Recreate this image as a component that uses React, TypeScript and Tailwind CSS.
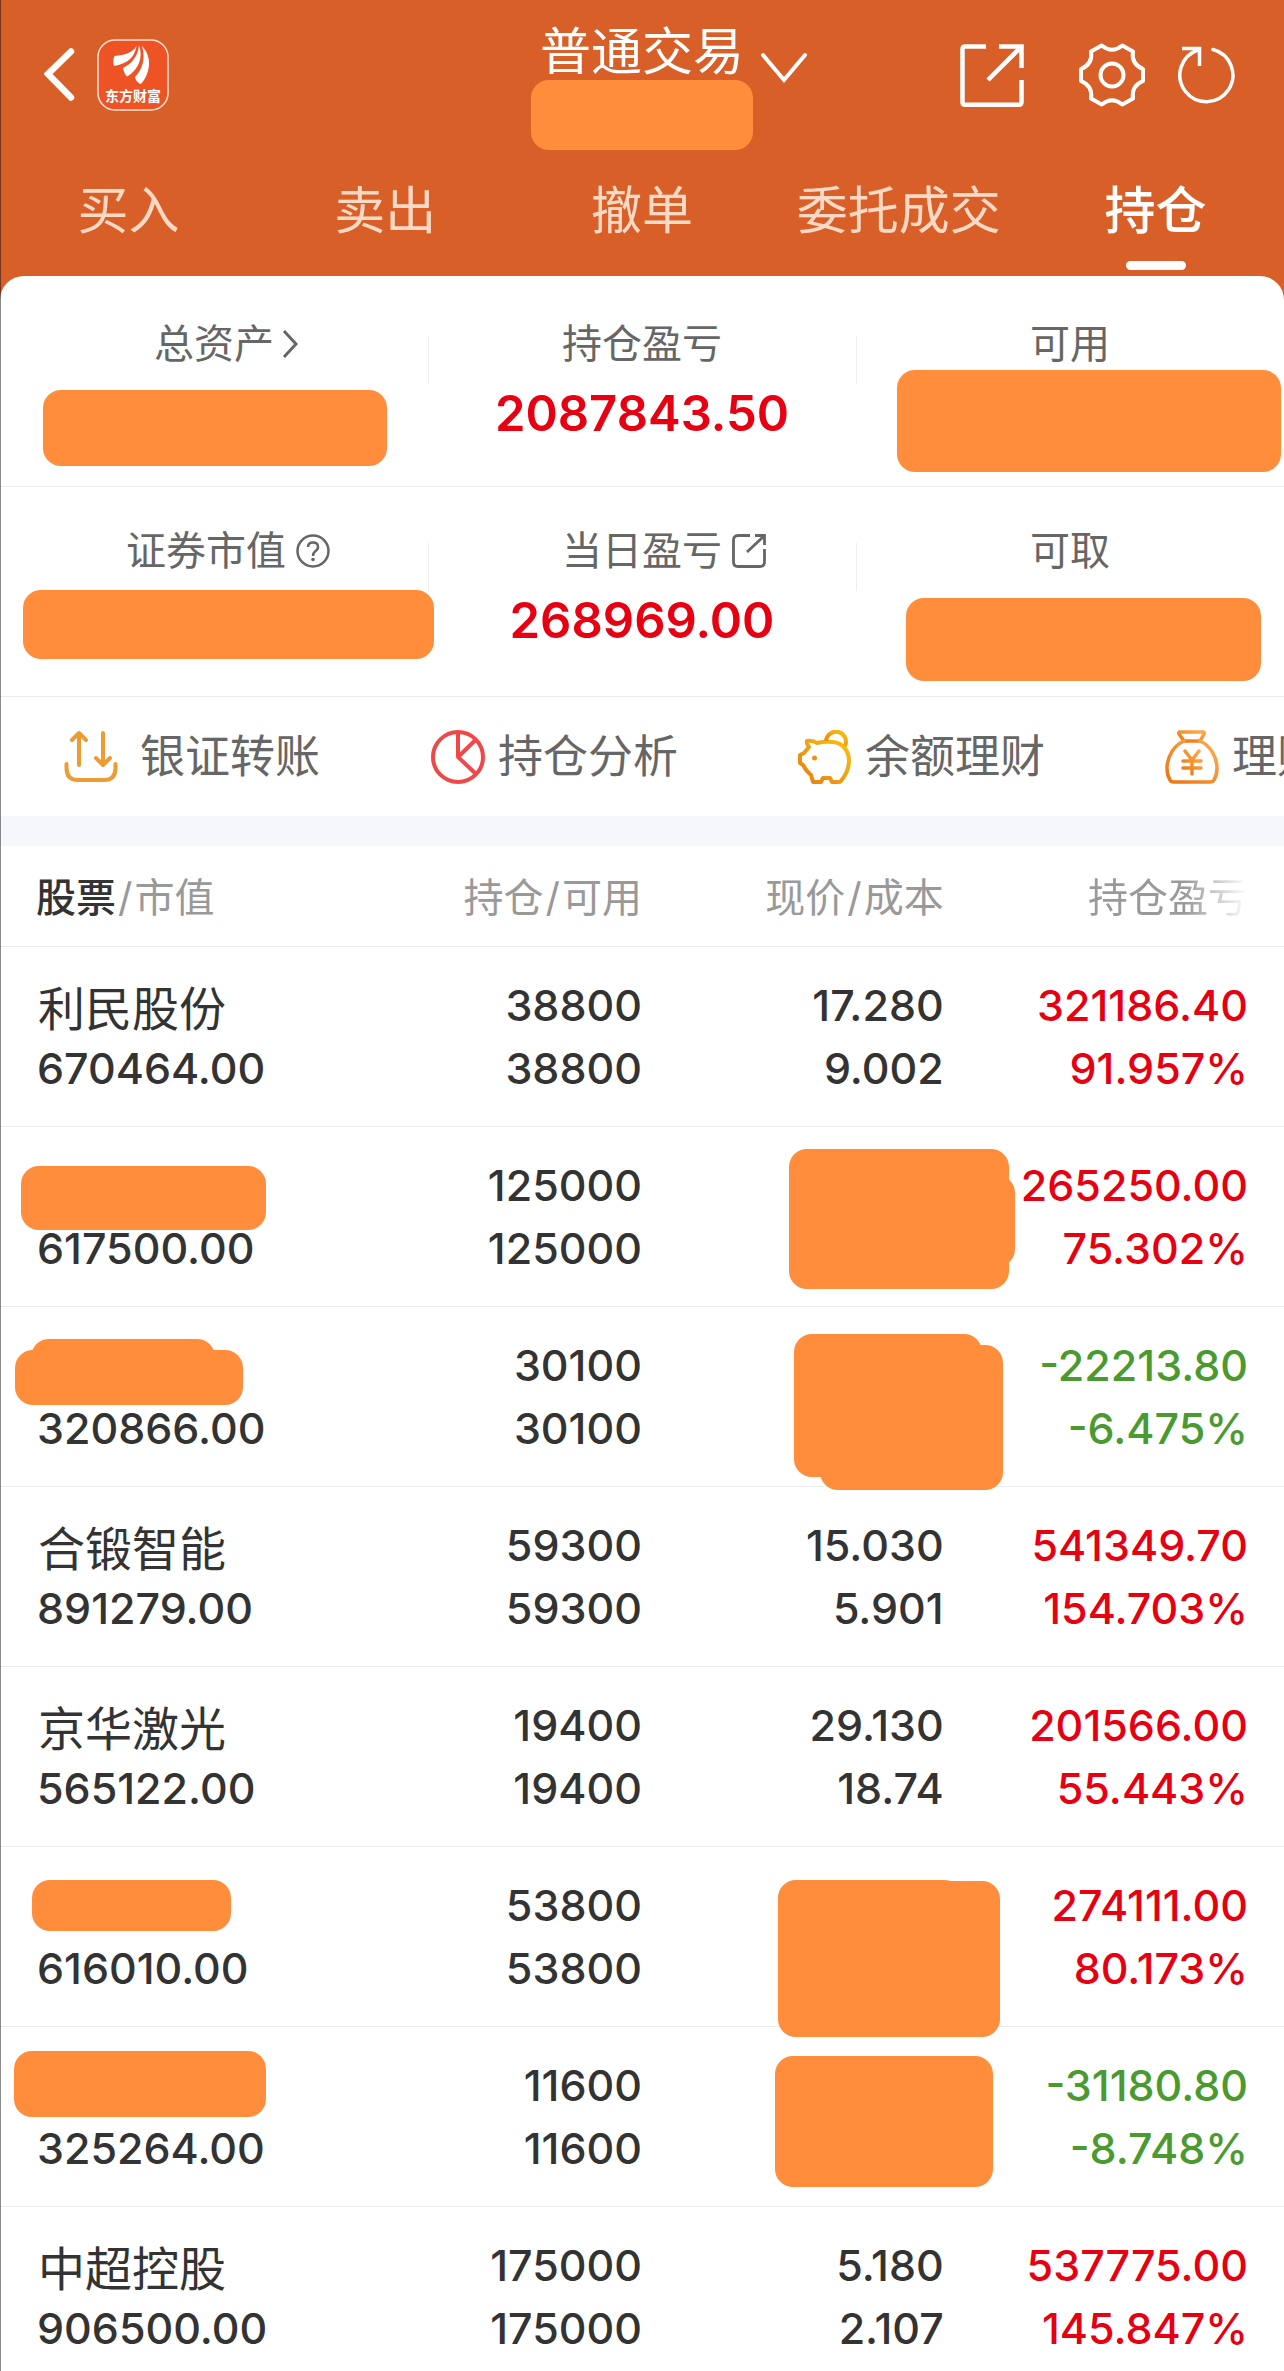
import React, { useState } from 'react';

type Holding = {
  name?: string;
  value: string;
  amount: string;
  available: string;
  price?: string;
  cost?: string;
  profit: string;
  rate: string;
  nameMasks?: string[];
  priceMasks?: string[];
};

const tabs = ['买入', '卖出', '撤单', '委托成交', '持仓'];

const holdings: Holding[] = [
  {
    name: '利民股份', value: '670464.00', amount: '38800', available: '38800',
    price: '17.280', cost: '9.002', profit: '321186.40', rate: '91.957%',
  },
  {
    value: '617500.00', amount: '125000', available: '125000', profit: '265250.00', rate: '75.302%',
    nameMasks: ['left-[21px] top-[39px] h-[64px] w-[245px]'],
    priceMasks: [
      'left-[147px] top-[22px] h-[140px] w-[220px]',
      'left-[173px] top-[48px] h-[92px] w-[200px]',
    ],
  },
  {
    value: '320866.00', amount: '30100', available: '30100', profit: '-22213.80', rate: '-6.475%',
    nameMasks: [
      'left-[31px] top-[32px] h-[60px] w-[184px]',
      'left-[15px] top-[43px] h-[55px] w-[228px]',
    ],
    priceMasks: [
      'left-[152px] top-[27px] h-[143px] w-[188px]',
      'left-[178px] top-[38px] h-[145px] w-[183px]',
    ],
  },
  {
    name: '合锻智能', value: '891279.00', amount: '59300', available: '59300',
    price: '15.030', cost: '5.901', profit: '541349.70', rate: '154.703%',
  },
  {
    name: '京华激光', value: '565122.00', amount: '19400', available: '19400',
    price: '29.130', cost: '18.74', profit: '201566.00', rate: '55.443%',
  },
  {
    value: '616010.00', amount: '53800', available: '53800', profit: '274111.00', rate: '80.173%',
    nameMasks: ['left-[32px] top-[33px] h-[51px] w-[199px]'],
    priceMasks: [
      'left-[136px] top-[33px] h-[100px] w-[184px]',
      'left-[136px] top-[34px] h-[156px] w-[222px]',
    ],
  },
  {
    value: '325264.00', amount: '11600', available: '11600', profit: '-31180.80', rate: '-8.748%',
    nameMasks: ['left-[14px] top-[24px] h-[66px] w-[252px]'],
    priceMasks: ['left-[133px] top-[29px] h-[131px] w-[218px]'],
  },
  {
    name: '中超控股', value: '906500.00', amount: '175000', available: '175000',
    price: '5.180', cost: '2.107', profit: '537775.00', rate: '145.847%',
  },
];

// Solid block hiding private data
const Mask: React.FC<{ className: string }> = ({ className }) => (
  <span className={`absolute z-10 rounded-[18px] bg-[#ff8d3b] ${className}`} />
);

const Logo = () => (
  <svg width="72" height="72" viewBox="0 0 72 72" role="img" aria-label="东方财富">
    <rect x="1" y="1" width="70" height="70" rx="17" fill="#ee5326" stroke="#fbe3d8" strokeWidth="1.5" />
    <g fill="#fff">
      <path d="M39.5 7C35 14 28 16 17.500 17C16 20 16 24 17 27C30 25 38 18 39.500 7Z" />
      <path d="M42 6.500C41 18 34 25 26 29C26.500 32 28 36 30 37.500C40 32 47 20 42 6.500Z" />
      <path d="M45 7C49 20 45 31 38 38C38.500 41 41 44.500 44 45C53 35 56 18 45 7Z" />
      <text x="36" y="62" textAnchor="middle" fontSize="14" fontWeight="700" fontFamily="Noto Sans CJK SC">东方财富</text>
    </g>
  </svg>
);

const TransferIcon = () => (
  <svg width="54" height="54" viewBox="0 0 54 54" fill="none" stroke="#eb9c33" strokeWidth="4" strokeLinecap="round" strokeLinejoin="round">
    <path d="M15 35V3M8 10L15 3L22 10M39 3V35M32 28L39 35L46 28" />
    <path d="M2.500 34V38Q2.500 50 14 50H40Q51.500 50 51.500 38V34" />
  </svg>
);

const PieIcon = () => (
  <svg width="54" height="54" viewBox="0 0 54 54" fill="none" stroke="#f04848" strokeWidth="4">
    <circle cx="27" cy="27" r="25" />
    <path d="M27 2V27L44.500 10M27 27L44.500 43.500" strokeLinejoin="round" />
  </svg>
);

const PigIcon = () => (
  <svg width="54" height="54" viewBox="0 0 54 54" fill="none" stroke="url(#pig)" strokeWidth="4" strokeLinejoin="round">
    <defs>
      <linearGradient id="pig" x1="0" y1="1" x2="1" y2="0">
        <stop offset="0" stopColor="#e67f14" />
        <stop offset="1" stopColor="#fbc00d" />
      </linearGradient>
    </defs>
    <path d="M9 11Q15 10 19 13Q27 11 35 12C45 13 51 21 51 31C51 39 47 46 43 51Q42 52 40 52H34L32 48H25L23 52H15L13 45Q8 41 5 35L2 33V25L6 23L11 17Q8 13 9 11Z" />
    <path d="M28 11A10 10 0 1 1 47 16" />
    <circle cx="16.500" cy="28" r="2.500" fill="#eb9314" stroke="none" />
  </svg>
);

const BagIcon = () => (
  <svg width="54" height="54" viewBox="0 0 54 54" fill="none" stroke="url(#bag)" strokeWidth="3.500" strokeLinecap="round" strokeLinejoin="round">
    <defs>
      <linearGradient id="bag" x1="0" y1="1" x2="1" y2="0">
        <stop offset="0" stopColor="#ee7410" />
        <stop offset="1" stopColor="#ffab4c" />
      </linearGradient>
    </defs>
    <path d="M15 2H38Q40 2 39 4L35 11H19L14 4Q13 2 15 2Z" />
    <path d="M19 11C9 15 2 27 2 38Q2 45 5 50Q6 52 9 52H45Q48 52 49 50Q52 45 52 38C52 27 45 15 35 11" />
    <path d="M20 21L27 30L34 21M27 30V44M18 31H36M18 38H36" />
  </svg>
);

const ChevronSmall = () => (
  <svg className="-mr-6 ml-2 shrink-0" width="16" height="28" viewBox="0 0 16 28" fill="none" stroke="#666" strokeWidth="3">
    <path d="M2 1L14 14L2 27" />
  </svg>
);

const HelpSmall = () => (
  <svg className="-mr-7 ml-2.5 shrink-0" width="34" height="34" viewBox="0 0 34 34" fill="none" stroke="#666" strokeWidth="2.500">
    <circle cx="17" cy="17" r="15.500" />
    <path d="M12 13Q12 8.500 17 8.500Q22 8.500 22 13Q22 15.500 19 17.500Q17 19 17 22" />
    <circle cx="17" cy="25.500" r="1.800" fill="#666" stroke="none" />
  </svg>
);

const OpenSmall = () => (
  <svg className="-mr-11 ml-2.5 shrink-0" width="34" height="34" viewBox="0 0 34 34" fill="none" stroke="#666" strokeWidth="2.800">
    <path d="M18 1.500H6Q1.500 1.500 1.500 6V28Q1.500 32.500 6 32.500H28Q32.500 32.500 32.500 28V15" />
    <path d="M23 1.500H32.500V11M32 2L15 18" />
  </svg>
);

const actions = [
  { label: '银证转账', icon: <TransferIcon />, gap: 'gap-[22px]' },
  { label: '持仓分析', icon: <PieIcon />, gap: 'gap-[13px]' },
  { label: '余额理财', icon: <PigIcon />, gap: 'gap-[13px]' },
  { label: '理财', icon: <BagIcon />, gap: 'gap-[13px]' },
];

type StatProps = { label: string; icon?: React.ReactNode; value?: string; mask?: string; divider?: boolean };

const Stat: React.FC<StatProps> = ({ label, icon, value, mask, divider }) => (
  <div className="relative flex flex-col items-center">
    <div className="flex h-14 items-center text-[40px] text-[#666]">
      {label}
      {icon}
    </div>
    {value && <div className="mt-3 text-[49px] leading-[60px] font-semibold text-[#e60012]">{value}</div>}
    {divider && <span className="absolute top-5 -right-px h-12 w-px bg-[#eee]" />}
    {mask && <Mask className={mask} />}
  </div>
);

const App: React.FC = () => {
  const [activeTab, setActiveTab] = useState('持仓');

  return (
    <div className="relative flex min-h-screen flex-col overflow-hidden bg-[#d86028] font-['Inter','Noto_Sans_CJK_SC',sans-serif]">
      <header className="text-white">
        <div className="grid grid-cols-[1fr_auto_1fr] items-start pt-5">
          <div className="flex h-[110px] items-center gap-[22px] pl-11">
            <button aria-label="返回">
              <svg width="31" height="54" viewBox="0 0 31 54" fill="none" stroke="#fff" strokeWidth="6.500" strokeLinecap="round">
                <path d="M27 3.500L4 26L27 49.500" />
              </svg>
            </button>
            <Logo />
          </div>
          <div className="relative flex w-[222px] flex-col items-center">
            <button className="h-[60px] text-[51px] leading-[63px] whitespace-nowrap">
              普通交易
              <svg className="absolute top-8 left-full ml-2" width="46" height="32" viewBox="0 0 46 32" fill="none" stroke="#fff" strokeWidth="4" strokeLinecap="round">
                <path d="M2 3L23 28L44 3" />
              </svg>
            </button>
            <span className="h-[70px] w-full rounded-[18px] bg-[#ff8d3b]" />
          </div>
          <div className="flex h-[110px] items-center justify-end pr-12">
            <button aria-label="分享" className="mr-[55px]">
              <svg width="64" height="64" viewBox="0 0 64 64" fill="none" stroke="#fff" strokeWidth="4.500">
                <path d="M26 3.500H5Q2.500 3.500 2.500 6V59Q2.500 61.700 5 61.700H59Q61.500 61.700 61.500 59V37" />
                <path d="M39 3.500H61.500V25M61 4L28 37" />
              </svg>
            </button>
            <button aria-label="设置" className="mr-[33px]">
              <svg width="66" height="64" viewBox="0 0 66 64" fill="none" stroke="#fff" strokeWidth="4" strokeLinejoin="round">
                <path d="M22.700 2.500Q33 11 43.300 2.500L54 8.500Q52 21 64 26V38Q52 43 54 55.500L43.300 61.500Q33 53 22.700 61.500L12 55.500Q14 43 2 38V26Q14 21 12 8.500Z" />
                <circle cx="33" cy="32" r="11.500" />
              </svg>
            </button>
            <button aria-label="刷新">
              <svg width="58" height="58" viewBox="0 0 58 58" fill="none" stroke="#fff" strokeWidth="3.500">
                <path d="M35 3.500A26.500 26.500 0 1 1 20 4" strokeLinecap="round" />
                <path d="M4 2.500H21.500V20" />
              </svg>
            </button>
          </div>
        </div>

        <nav className="grid h-[126px] grid-cols-5 pt-[31px]">
          {tabs.map((tab) => (
            <button
              key={tab}
              onClick={() => setActiveTab(tab)}
              className={`flex flex-col items-center text-[51px] leading-[60px] whitespace-nowrap ${
                tab === activeTab ? 'font-medium text-white' : 'text-[#fcd9c5]'
              }`}
            >
              {tab}
              {tab === activeTab && <span className="mt-5 h-[9px] w-[60px] rounded-full bg-white" />}
            </button>
          ))}
        </nav>
      </header>

      <main className="flex-1 rounded-t-3xl bg-white">
        <section className="grid h-[211px] grid-cols-3 border-b border-[#ebebeb] pt-10">
          <Stat label="总资产" icon={<ChevronSmall />} mask="left-[43px] top-[74px] h-[76px] w-[344px]" divider />
          <Stat label="持仓盈亏" value="2087843.50" divider />
          <Stat label="可用" mask="left-[41px] top-[54px] h-[102px] w-[384px]" />
        </section>
        <section className="grid h-[210px] grid-cols-3 border-b border-[#ebebeb] pt-9">
          <Stat label="证券市值" icon={<HelpSmall />} mask="left-[23px] top-[67px] h-[69px] w-[411px]" divider />
          <Stat label="当日盈亏" icon={<OpenSmall />} value="268969.00" divider />
          <Stat label="可取" mask="left-[50px] top-[75px] h-[83px] w-[355px]" />
        </section>

        <section className="flex h-[119px] items-center overflow-hidden pl-16">
          {actions.map(({ label, icon, gap }) => (
            <button key={label} className={`flex w-[367px] shrink-0 items-center text-[45px] text-[#666] ${gap}`}>
              {icon}
              {label}
            </button>
          ))}
        </section>

        <div className="h-[30px] bg-[#f6f7fa]" />

        <table className="w-full table-fixed border-separate border-spacing-0">
          <thead>
            <tr className="h-[101px] text-right text-[40px] text-[#999] [&>th]:border-b [&>th]:border-[#ebebeb] [&>th]:p-0 [&>th]:pt-1 [&>th]:font-normal [&>th]:whitespace-nowrap">
              <th className="w-[32%] text-left">
                <span className="pl-9 font-medium text-[#333]">股票</span>
                <span className="mx-0.5">/</span>市值
              </th>
              <th className="w-[18%]">持仓<span className="mx-0.5">/</span>可用</th>
              <th className="w-[23.5%]">现价<span className="mx-0.5">/</span>成本</th>
              <th>
                <span className="mr-9 bg-linear-to-r from-[#999] from-60% to-white bg-clip-text text-transparent">持仓盈亏</span>
              </th>
            </tr>
          </thead>
          <tbody>
            {holdings.map((item) => (
              <tr
                key={item.value}
                className="text-right text-[43px] leading-[63px] font-medium text-[#333] [&>td]:relative [&>td]:border-b [&>td]:border-[#ebebeb] [&>td]:p-0 [&>td]:pt-[27px] [&>td]:pb-[26px] last:[&>td]:border-b-0 last:[&>td]:pb-0"
              >
                <td className="text-left">
                  <div className="h-[63px] pl-[38px] text-[47px] leading-[69px] font-normal">{item.name}</div>
                  <div className="pl-[37px]">{item.value}</div>
                  {item.nameMasks?.map((mask) => <Mask key={mask} className={mask} />)}
                </td>
                <td>
                  <div>{item.amount}</div>
                  <div>{item.available}</div>
                </td>
                <td>
                  <div>{item.price}</div>
                  <div>{item.cost}</div>
                  {item.priceMasks?.map((mask) => <Mask key={mask} className={mask} />)}
                </td>
                <td className={item.profit.startsWith('-') ? 'text-[#4a9a2f]' : 'text-[#e60012]'}>
                  <div className="pr-9">{item.profit}</div>
                  <div className="pr-9">{item.rate}</div>
                </td>
              </tr>
            ))}
          </tbody>
        </table>
      </main>

      {/* Thin shade along the screen edge */}
      <span className="absolute inset-y-0 left-0 w-px bg-black/45" />
    </div>
  );
};

export default App;
